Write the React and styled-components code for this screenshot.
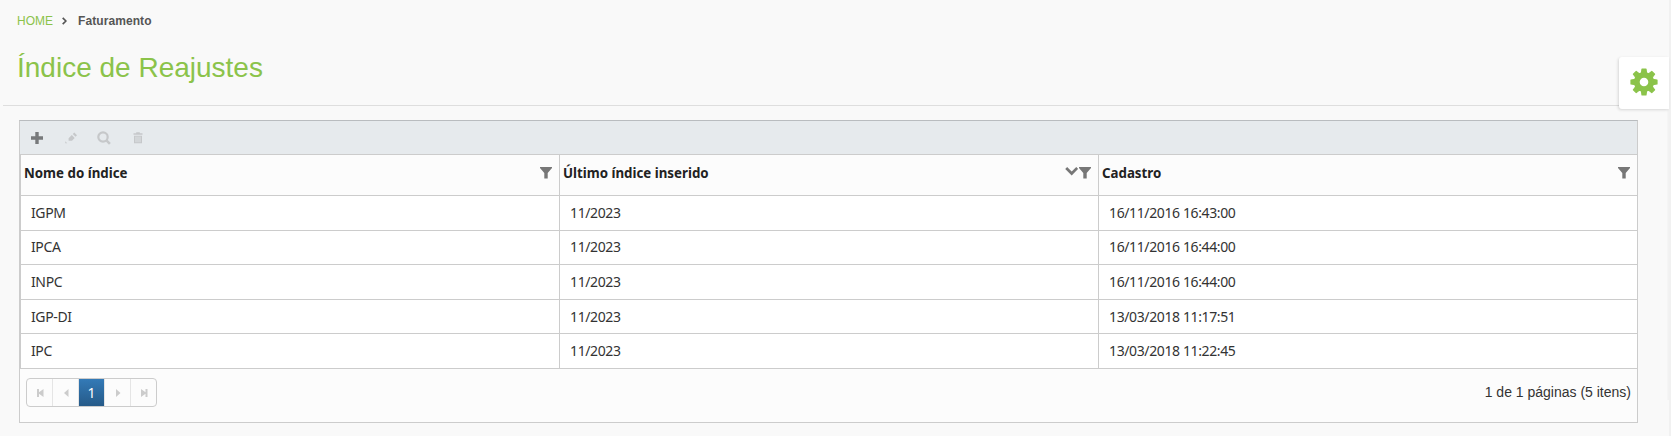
import React from "react";
import styled, { createGlobalStyle } from "styled-components";

const Global = createGlobalStyle`
  * { box-sizing: border-box; }
  body { margin: 0; background: #f9f9f9; overflow: hidden; }
`;

const Page = styled.div`
  position: relative;
  height: 436px;
  background: #f9f9f9;
  border-right: 2px solid #f1f1f1;
  font-family: "Liberation Sans", Arial, sans-serif;
`;

const Breadcrumb = styled.nav`
  display: flex;
  align-items: center;
  height: 41px;
  padding-left: 17px;
  font-size: 12px;
  color: #555;
`;

const HomeLink = styled.a`
  color: #8bc34a;
`;

const Separator = styled.svg`
  width: 5px;
  height: 8px;
  margin: 0 11.5px 0 8.5px;
`;

const Crumb = styled.span`
  font-weight: bold;
  letter-spacing: 0.08px;
`;

const Title = styled.h1`
  margin: 0 0 0 3px;
  height: 65px;
  padding-left: 14px;
  border-bottom: 1px solid #dedede;
  font-size: 28px;
  font-weight: normal;
  line-height: 53px;
  color: #8bc34a;
`;

const Grid = styled.section`
  display: flex;
  flex-direction: column;
  width: 1619px;
  height: 303px;
  margin: 14px 0 0 19px;
  border: 1px solid #ccc;
  background: #fcfcfc;
  border-top-color: #b9bcbf;
`;

const Toolbar = styled.div`
  display: flex;
  align-items: center;
  height: 33px;
  padding-left: 9px;
  gap: 17.6px;
  background: #e6eaed;
`;

const ToolButton = styled.button`
  display: flex;
  align-items: center;
  justify-content: center;
  width: 16px;
  height: 16px;
  padding: 0;
  border: 0;
  background: none;
  color: ${(p) => (p.disabled ? "#c6c8ca" : "#77797b")};
`;

const Table = styled.table`
  width: 1618px;
  table-layout: fixed;
  margin-left: -1px;
  border-spacing: 0;
  border-left: 2px solid #ccc;
  font-family: "Noto Sans", "Segoe UI", sans-serif;
  font-size: 14px;
  color: #333;
`;

const HeadCell = styled.th`
  width: ${(p) => p.$width};
  height: 42px;
  padding: 0 7px 5px 3px;
  border: solid #ccc;
  border-width: 1px 0 1px ${(p) => (p.$first ? 0 : "1px")};
  text-align: left;
  font-size: 13.3px;
  color: #222;
`;

const HeadContent = styled.div`
  display: flex;
  align-items: center;
  justify-content: space-between;
`;

const HeadIcons = styled.span`
  display: flex;
  align-items: center;
  gap: 1px;
`;

const Cell = styled.td`
  height: ${(p) => p.$height}px;
  padding: 0 10px ${(p) => (p.$raised ? "2px" : 0)};
  border: solid #ccc;
  border-width: 0 0 1px ${(p) => (p.$first ? 0 : "1px")};
  background: #fff;
  font-size: 14px;
  letter-spacing: -0.38px;
  line-height: 18px;
`;

const Footer = styled.footer`
  display: flex;
  align-items: flex-start;
  justify-content: space-between;
  padding: 9px 6px 0;
  font-size: 14px;
  color: #333;
`;

const Pager = styled.div`
  display: flex;
  width: 131px;
  height: 29px;
  border: 1px solid #ccc;
  border-radius: 4px;
  overflow: hidden;
`;

const PagerButton = styled.button`
  display: flex;
  flex: 0 0 26px;
  align-items: center;
  justify-content: center;
  padding: 0;
  border: 0;
  border-right: 1px solid #e5e5e5;
  background: ${(p) => (p.$active ? "linear-gradient(#337ab7, #265a88)" : "none")};
  color: ${(p) => (p.$active ? "#fff" : "#ccc")};
  font: 14px "Noto Sans", sans-serif;
  &:last-child { flex-basis: 25px; border-right: 0; }
`;

const Summary = styled.span`
  line-height: 28px;
`;

const SettingsTab = styled.button`
  position: absolute;
  top: 57px;
  right: 0;
  display: flex;
  align-items: center;
  justify-content: center;
  width: 50px;
  height: 52px;
  padding: 0 0 3px 0;
  border: 0;
  border-radius: 3px 0 0 3px;
  background: #fff;
  box-shadow: -1px 1px 3px rgba(0, 0, 0, 0.14);
  color: #8bc34a;
`;

const EdgeShade = styled.div`
  position: absolute;
  top: 109px;
  right: 0;
  width: 2px;
  height: 291px;
  background: linear-gradient(to right, #f6f6f6, #f1f1f1);
`;

const Icon = ({ size = 12, children }) => (
  <svg width={size} height={size} viewBox={`0 0 ${size} ${size}`} fill="currentColor">{children}</svg>
);

const Filter = () => (
  <svg width="12" height="12" viewBox="0 0 12 12" fill="#777"><path d="M0 0h12v1L7.700 6v5.500H4.300V6L0 1z" /></svg>
);

const SortArrow = () => (
  <svg width="13" height="12" viewBox="0 0 13 12" fill="none" stroke="#777" strokeWidth="2.700"><path d="M1.200 1l5.500 5.500L12.200 1" /></svg>
);

const rows = [
  ["IGPM", "11/2023", "16/11/2016 16:43:00", 35],
  ["IPCA", "11/2023", "16/11/2016 16:44:00", 34, true],
  ["INPC", "11/2023", "16/11/2016 16:44:00", 35],
  ["IGP-DI", "11/2023", "13/03/2018 11:17:51", 34],
  ["IPC", "11/2023", "13/03/2018 11:22:45", 35],
];

const columns = [
  ["Nome do índice", "538px"],
  ["Último índice inserido", "539px"],
  ["Cadastro", "539px"],
];

export default function App() {
  return (
    <Page>
      <Global />
      <Breadcrumb>
        <HomeLink>HOME</HomeLink>
        <Separator viewBox="0 0 5 8" fill="none" stroke="#555" strokeWidth="1.700"><path d="M.7.900L3.900 4 .7 7.100" /></Separator>
        <Crumb>Faturamento</Crumb>
      </Breadcrumb>
      <Title>Índice de Reajustes</Title>
      <Grid>
        <Toolbar>
          <ToolButton><Icon><path d="M4.300 0h3.400v4.300H12v3.400H7.700V12H4.300V7.700H0V4.300h4.300z" /></Icon></ToolButton>
          <ToolButton disabled><Icon><path d="M9.300.600L12 3.300l-1.500 1.500-2.700-2.700zM6.800 3.100l2.900 2.900-2.700 2.700H3.600V6.300zM.3 9.300l1.900 1.900H.3z" /></Icon></ToolButton>
          <ToolButton disabled><Icon size={14}><circle cx="6" cy="6" r="4.700" fill="none" stroke="currentColor" strokeWidth="2.200" /><path d="M8.300 10.100l1.800-1.800 3.700 3.700-1.800 1.800z" /></Icon></ToolButton>
          <ToolButton disabled><Icon><path d="M1.500 1.300h2.700V.3h3.600v1h2.700v1.500h-9zM2 3.800h8v7.500H2z" /><path d="M4 4.500v5.800M6 4.500v5.800M8 4.500v5.800" stroke="#e6eaed" strokeWidth=".8" /></Icon></ToolButton>
        </Toolbar>
        <Table>
          <thead>
            <tr>
              {columns.map(([name, width], i) => (
                <HeadCell key={name} $first={i === 0} $width={width}>
                  <HeadContent>
                    {name}
                    <HeadIcons>{i === 1 && <SortArrow />}<Filter /></HeadIcons>
                  </HeadContent>
                </HeadCell>
              ))}
            </tr>
          </thead>
          <tbody>
            {rows.map(([name, last, created, height, raised]) => (
              <tr key={name}>
                <Cell $first $height={height} $raised={raised}>{name}</Cell>
                <Cell $height={height} $raised={raised}>{last}</Cell>
                <Cell $height={height} $raised={raised}>{created}</Cell>
              </tr>
            ))}
          </tbody>
        </Table>
        <Footer>
          <Pager>
            <PagerButton><Icon size={8}><path d="M1 0h2v3.300L7.500 0v8L3 4.700V8H1z" /></Icon></PagerButton>
            <PagerButton><Icon size={8}><path d="M6.500 0v8L2 4z" /></Icon></PagerButton>
            <PagerButton $active>1</PagerButton>
            <PagerButton><Icon size={8}><path d="M2 0v8l4.500-4z" /></Icon></PagerButton>
            <PagerButton><Icon size={8}><path d="M7.500 0h-2v3.300L1 0v8l4.500-3.300V8h2z" /></Icon></PagerButton>
          </Pager>
          <Summary>1 de 1 páginas (5 itens)</Summary>
        </Footer>
      </Grid>
      <EdgeShade />
      <SettingsTab>
        <svg width="28" height="28" viewBox="0 0 28 28" fill="none" stroke="currentColor">
          <circle cx="14" cy="14" r="7.200" strokeWidth="5.800" />
          {[0, 45, 90, 135].map((a) => (
            <path key={a} transform={`rotate(${a} 14 14)`} d="M12 1h4l.6 4.500h-5.200zM12 27h4l.6-4.500h-5.200z" fill="currentColor" strokeWidth="1.200" strokeLinejoin="round" />
          ))}
        </svg>
      </SettingsTab>
    </Page>
  );
}
